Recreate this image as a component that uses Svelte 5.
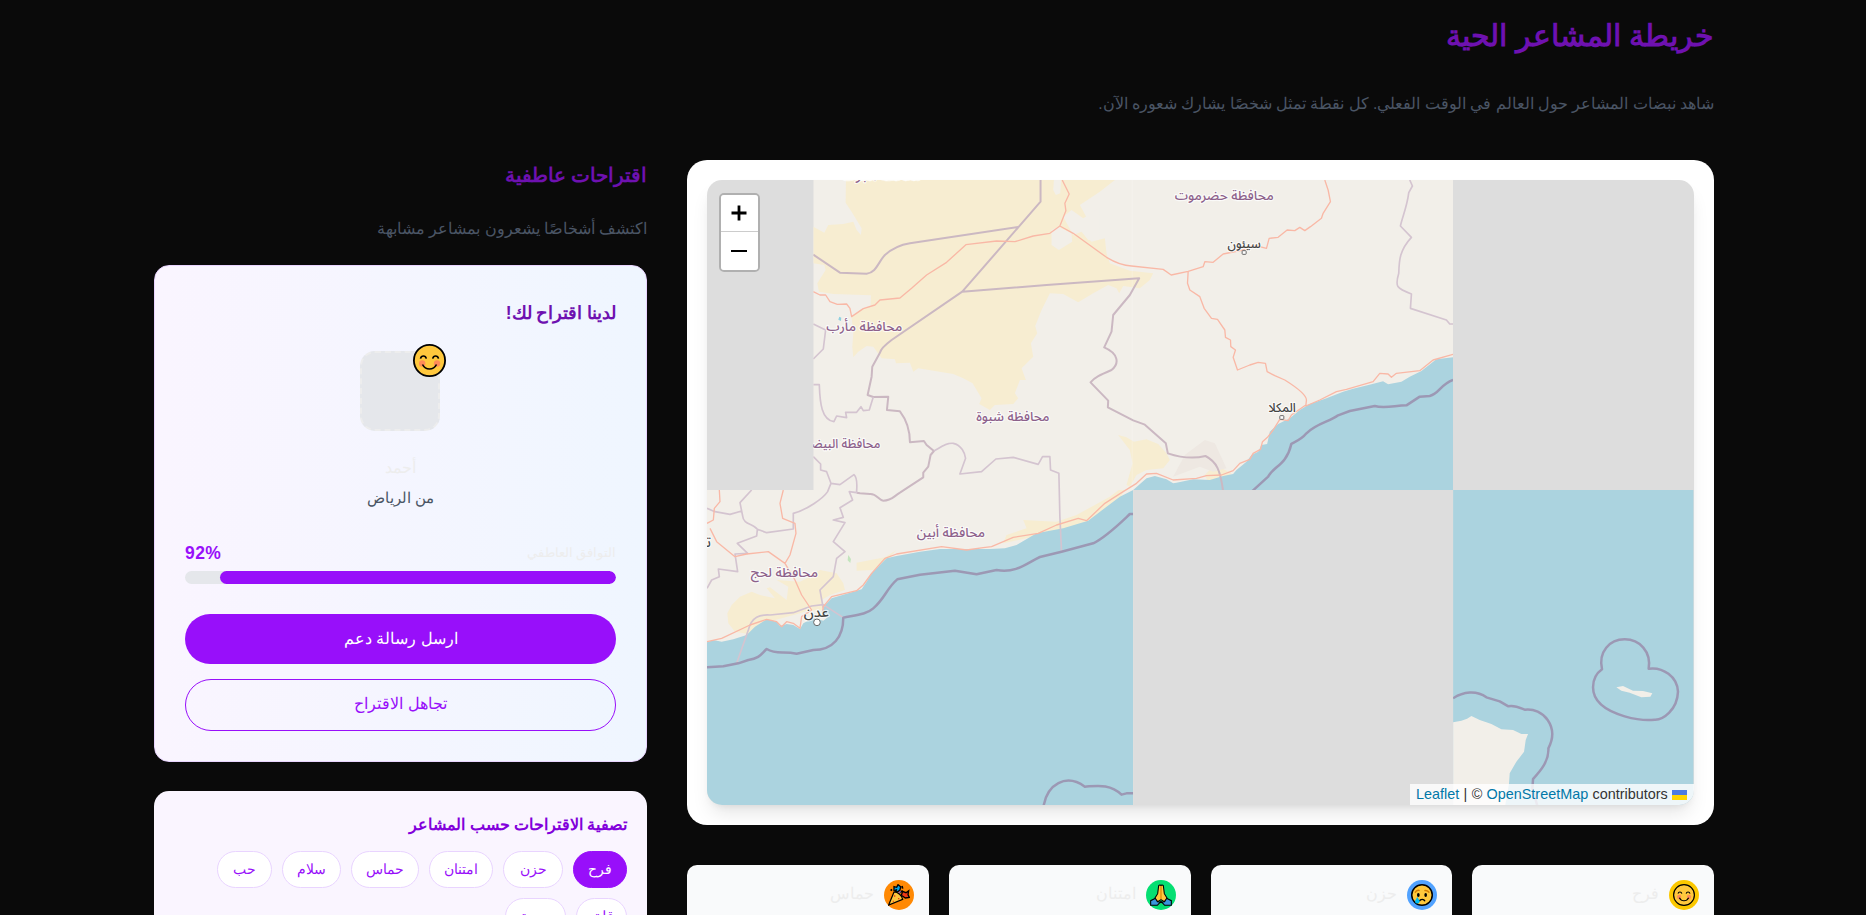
<script>
  const chips = [
    { label: 'فرح', width: 54 },
    { label: 'حزن', width: 60 },
    { label: 'امتنان', width: 64 },
    { label: 'حماس', width: 68 },
    { label: 'سلام', width: 59 },
    { label: 'حب', width: 55 },
    { label: 'قلق', width: 51 },
    { label: 'وحدة', width: 61 }
  ];
  const stats = [
    { label: 'فرح', icon: 'joy', color: '#fcc800' },
    { label: 'حزن', icon: 'sad', color: '#51a2ff' },
    { label: 'امتنان', icon: 'pray', color: '#05df72' },
    { label: 'حماس', icon: 'party', color: '#ff8904' }
  ];
  const match = 92;
  let active = $state('فرح');
</script>

{#snippet emoji(kind)}
  <svg class="emoji" viewBox="0 0 33 33" aria-hidden="true">
    {#if kind === 'joy'}
      <circle cx="16.5" cy="16.5" r="15.6" fill="#ffc83d" stroke="#000" stroke-width="1.8" />
      <circle cx="9.2" cy="19.5" r="3.2" fill="#ff8b58" />
      <circle cx="24" cy="19.5" r="3.2" fill="#ff8b58" />
      <path d="M7.5 14.6c.8-3.400 5-3.400 5.800 0M19.700 14.600c.8-3.400 5-3.400 5.800 0M9.500 20.500c3 6 11 6 14 0" fill="none" stroke="#000" stroke-width="1.6" />
    {:else if kind === 'sad'}
      <circle cx="16.5" cy="16.5" r="15.4" fill="#ffc83d" stroke="#000" stroke-width="2.2" />
      <path d="M6 13c2-3.500 4.500-4 7-3M20 10c3-1 5.500 0 7.500 3" fill="none" stroke="#d67d00" stroke-width="2.200" />
      <ellipse cx="11" cy="16.500" rx="2" ry="3" /><ellipse cx="22" cy="16.500" rx="2" ry="3" />
      <path d="M12.500 26c1.500-4 7-4 8.500 0" fill="none" stroke="#000" stroke-width="2" />
      <path d="M9.500 19.500c-2 3.500-3.500 5-3.500 7a3.600 3.600 0 0 0 7 0c0-2-1.500-3.500-3.500-7z" fill="#00bcf2" />
    {:else if kind === 'pray'}
      <path d="M9 21L1 25v7h10l5.500-6 5.500 6h10v-7l-8-4-2 5-5.500 2-5.500-2z" fill="#3a96dd" stroke="#000" stroke-width="1.600" />
      <path d="M13 2.500c1.500-2 3.500-1 3.500.5 0-1.500 2-2.500 3.500-.5l1.500 12 4 6.500-4 5.500-5-3-5 3L7.500 21l4-6.500z" fill="#ffc83d" stroke="#000" stroke-width="1.600" />
      <path d="M16.500 3v20" stroke="#d67d00" stroke-width="1.600" />
    {:else}
      <path d="M9 4l4 1 2-4 4 3-1 5-4 3-5-2z" fill="#00a2e8" stroke="#000" stroke-width="2" />
      <path d="M20 17l2-6 5 2 4-3-1 6 2 4-6 1z" fill="#f03a17" stroke="#000" stroke-width="2" />
      <path d="M17 13l5-3M6 8l-2 2M11 11l2-3M21 3l1 4" stroke="#000" stroke-width="2.500" />
      <path d="M15 15l4-4" stroke="#8661c5" stroke-width="2.200" />
      <path d="M9 12L1 31.500 22 23c-1-6-7-11-13-11z" fill="#ffc83d" stroke="#000" stroke-width="1.800" />
      <path d="M10 17v2M16 21v2M8 25v1.500" stroke="#f03a17" stroke-width="2" />
    {/if}
  </svg>
{/snippet}

{#snippet label(x, y, size, width, text)}
  <text {x} {y} font-size={size} textLength={width} lengthAdjust="spacingAndGlyphs">{text}</text>
{/snippet}

<div class="page" dir="rtl">
  <header>
    <h1>خريطة المشاعر الحية</h1>
    <p>شاهد نبضات المشاعر حول العالم في الوقت الفعلي. كل نقطة تمثل شخصًا يشارك شعوره الآن.</p>
  </header>

  <div class="layout">
    <main>
      <section class="map-card">
        <div class="map" dir="ltr">
          <svg class="tiles" viewBox="81 90 2961 1875" preserveAspectRatio="none">
            <defs>
              <clipPath id="north"><rect x="400" y="90" width="1920" height="930" /></clipPath>
              <clipPath id="southwest"><rect x="81" y="1020" width="1279" height="945" /></clipPath>
              <clipPath id="southeast"><rect x="2320" y="1020" width="722" height="945" /></clipPath>
              <clipPath id="land"><path d="M400 90H2320V1020H1360V1965H81V1020H400z" /></clipPath>
            </defs>

            <g clip-path="url(#north)">
              <rect x="400" y="90" width="1920" height="930" fill="#f2efe9" />
              <path class="desert" d="M498 90L497 158 515 185 545 235 543 255 530 240 520 215 490 222 445 225 433 248 400 230V340L433 345 437 360 412 400 417 425 460 432 573 436 572 468 540 480 515 500 520 550 517 590 520 622 535 605 560 588 580 590 605 625 645 628 648 640 690 638 700 665 715 655 820 672 850 685 878 700 905 745 898 762 930 780 945 765 1000 762 1015 745 1005 730 1020 690 1038 690 1025 655 1060 620 1053 580 1072 550 1066 528 1085 480 1100 450 1110 430 1150 432 1195 457 1240 430 1285 405 1310 415 1318 430 1330 408 1380 415 1410 390 1420 370 1350 362 1290 340 1280 310 1275 265 1235 275 1220 260 1235 230 1200 165 1260 125 1305 90z" />
              <path d="M1122 90h22l-3 40-13 5-8-15zM1150 200l25-20 35 25 25-15 25-20v90l-35 10-20-25-25 10zM1115 240l20-10 40 20 2 25-40 25-22-15z" fill="#f2efe9" />
              <path class="desert" d="M1315 855L1340 862 1362 875 1400 868 1435 882 1460 910 1470 930 1450 955 1400 960 1370 975 1350 1010 1340 1005 1358 940 1350 900zM1595 955l30 0 30 15-20 15-50 10-10-20z" />
              <path d="M1480 980L1515 915 1575 870 1605 880 1640 955 1600 965 1560 950z" fill="#eee8e2" />
              <path class="sea" d="M2320 622L2270 628 2225 663 2190 680 2165 695 2125 703 2110 694 2075 703 2020 716 1990 725 1940 745 1890 762 1860 780 1830 805 1795 822 1770 845 1762 882 1745 885 1735 905 1715 915 1700 935 1670 960 1660 972 1630 978 1590 990 1540 988 1490 998 1480 1000 1460 988 1425 978 1400 985 1360 1020H2320z" />
              <path d="M1357 90V1020" stroke="#fff" stroke-width="2" opacity=".35" />
            </g>

            <g clip-path="url(#southwest)">
              <rect x="81" y="1020" width="1280" height="945" fill="#f2efe9" />
              <g transform="translate(0 990)">
                <path class="desert" d="M142 400L155 375 180 350 215 335 240 345 285 355 260 325 270 322 320 360 325 320 290 300 360 305 390 290 420 270 470 280 490 310 495 330 450 345 425 360 430 390 380 392 360 400 250 430 205 462 165 455 145 430zM530 248L615 232 650 210 620 240 580 270 530 272zM1030 120l100 5 60-20 100-55 60-45-30 50-95 70-80 25-60 15-115 25 10-25 60-20z" />
                <path class="sea" d="M1360 30L1320 50 1225 122 1150 145 1070 160 1010 195 975 205 930 207 840 207 780 207 720 215 650 228 620 235 575 280 560 305 545 328 520 335 455 355 435 375 425 395 445 410 430 422 400 415 370 430 360 447 340 435 320 432 300 438 290 425 260 418 225 440 200 465 160 478 125 485 100 480 81 487V975H1360z" />
                <path d="M505 225l8 12-2 12-8-8z" fill="#c3e4bd" />
              </g>
            </g>

            <g clip-path="url(#southeast)">
              <rect class="sea" x="2320" y="1020" width="722" height="945" />
              <g transform="translate(2100 990)">
                <path fill="#f2efe9" d="M220 727L245 722 262 716 275 708 300 720 335 732 365 748 400 750 425 762 445 762 438 780 433 815 410 845 390 880 388 910 375 985H220z" />
                <path fill="#f2efe9" d="M710 622L730 618 760 632 790 633 818 640 812 650 785 652 750 638 725 632z" />
                <path class="marine" d="M220 655C250 635 290 630 320 652L360 664 386 679C405 675 420 683 435 689 490 682 540 740 506 805 508 845 480 875 460 897L458 925 475 985" />
                <path class="marine" d="M667 568C655 515 690 478 735 478S815 515 807 566C850 560 893 590 895 635 893 690 850 720 825 719 790 724 760 716 735 709 690 696 640 672 640 622 640 600 650 580 667 568z" />
              </g>
            </g>

            <g clip-path="url(#land)">
              <path class="border thick" d="M1082 90V155L1015 232 847 425 635 570C615 585 603 595 600 608L577 650 575 680 563 735 580 741 625 740 621 780 660 784C680 810 690 840 690 877L732 873 740 885 762 903 752 915 745 950 730 968 730 982 660 1028C640 1040 635 1052 610 1052 595 1050 590 1030 570 1032L540 1030 530 1028M400 314L480 368 560 371C590 368 595 335 615 315 640 293 665 284 690 280L1015 231M847 425L1100 405 1378 385 1350 435 1300 495 1295 545 1273 592C1315 610 1320 640 1295 660 1260 675 1245 682 1232 697L1285 752 1284 772 1360 811 1395 824 1458 880 1464 910C1500 922 1540 927 1577 918 1610 935 1622 960 1630 1025" />
              <path class="border" d="M400 522L437 540 430 597 400 627M400 704L418 704C420 760 425 810 462 815L470 798 500 803 497 787 530 787 543 770 550 782 568 780 580 741M400 920L422 942 422 960 440 965 453 1000 480 1004 522 974C535 985 530 1010 530 1028M453 1000L443 1025C430 1045 380 1080 340 1090V1137L260 1148 232 1138C220 1120 190 1125 188 1098L180 1058 215 1020M762 903C785 890 800 878 820 880 845 885 855 910 857 925L840 972 905 965 948 927 1000 922 1075 943 1088 920 1110 920 1112 960 1137 970 1140 1100 1145 1205M81 1075L105 1085 150 1093 185 1083M232 1140L230 1158 172 1180 203 1210 165 1212 173 1265 115 1257 118 1280 95 1290 81 1315M530 1028L508 1025 518 1050 480 1073 490 1102 460 1110 495 1118 460 1175 495 1205 470 1225 460 1280 420 1320 430 1375M170 1540L205 1440C215 1400 240 1393 270 1395L340 1388 395 1368 430 1364 490 1403" />
              <path class="border" d="M2190 90L2198 108 2187 128C2182 170 2168 200 2162 228L2195 262C2160 300 2158 330 2157 370 2145 410 2150 415 2195 432L2192 475 2300 510 2310 522H2320" />
              <path class="road" d="M400 425L420 435 437 435 450 455 472 463 500 462 510 475 515 500 550 476 585 465 600 450 660 444 695 415 740 375 800 337 858 284 950 273 1005 275 1060 258 1110 250 1140 228 1158 182 1155 160 1168 132 1147 90M1140 228L1180 250 1280 322C1310 340 1330 347 1355 348L1450 358 1474 375 1525 364 1570 350 1575 335 1600 337 1630 312 1690 300 1720 285 1760 295 1768 265 1795 262 1822 240 1845 242 1860 232 1875 242 1892 230 1925 205 1930 190 1952 155 1945 120 1935 90M1525 364L1523 400 1530 420 1560 440 1573 475 1595 505 1613 508 1635 540 1637 562 1652 570 1653 590 1667 600 1660 622 1673 660 1710 645 1735 637 1757 640 1762 665 1785 677 1815 690C1850 712 1880 735 1880 750L1878 768 1920 750 1970 725 2000 718 2080 695 2100 670 2125 672 2135 682 2150 670 2220 662 2260 630 2320 613M1878 765L1835 795 1825 812 1800 808 1780 840 1763 862 1748 875 1742 898 1720 910 1710 928 1680 940 1660 962 1625 975 1580 977 1550 985 1480 990 1430 970 1400 972 1370 1000 1330 1025 1275 1060 1220 1112 1195 1105 1130 1125 1075 1150 1000 1162 935 1190 910 1193 860 1200 785 1190 650 1212 615 1225 575 1270 550 1305 530 1322 455 1340 430 1370 428 1385M118 1020L120 1055 103 1075 100 1110 81 1120M90 1135L110 1175 165 1220 200 1212 265 1205 315 1240 330 1215 348 1150 345 1120 308 1105 300 1060 310 1020M315 1240L345 1290 365 1335 395 1380 365 1400 360 1435 340 1420 320 1415 305 1430 290 1415 260 1408 210 1425 125 1465 81 1475" />
              <path class="marine" d="M2320 690C2280 705 2280 730 2250 738L2220 740 2180 766C2140 768 2110 776 2085 768L2010 783 1975 796C1950 815 1910 820 1880 850 1860 875 1830 880 1834 884 1820 945 1780 950 1765 980L1710 1030M81 1552L130 1549 175 1540 205 1530C240 1525 245 1510 260 1497 290 1515 310 1502 350 1511L400 1500C460 1500 490 1460 490 1403 530 1395 560 1393 580 1375 615 1345 620 1315 652 1288L720 1274 825 1262 890 1273 950 1260C1010 1270 1040 1240 1080 1221L1145 1205 1240 1180C1280 1160 1315 1125 1350 1092H1360M1090 1975C1100 1900 1160 1870 1215 1910 1250 1908 1290 1900 1325 1934L1340 1930H1360" />
              <path d="M478 500l6 3-1 10-8-4z" fill="#8fd0e0" />
            </g>

            <g class="label" text-anchor="middle">
              <g clip-path="url(#north)">
                {@render label(605, 89, 39, 237, 'محافظة الجوف')}
                {@render label(553, 543, 39, 228, 'محافظة مأرب')}
                {@render label(999, 814, 39, 220, 'محافظة شبوة')}
                {@render label(484, 894, 39, 234, 'محافظة البيضاء')}
                {@render label(1633, 151, 39, 297, 'محافظة حضرموت')}
              </g>
              <g clip-path="url(#southwest)">
                {@render label(813, 1161, 39, 205, 'محافظة أبين')}
                {@render label(313, 1281, 39, 202, 'محافظة لحج')}
                <g class="city">
                  {@render label(68, 1190, 42, 50, 'تعز')}
                  {@render label(409, 1400, 42, 76, 'عدن')}
                  <circle cx="411" cy="1417" r="10" />
                </g>
              </g>
              <g class="city">
                {@render label(1693, 294, 38, 100, 'سيئون')}
                <rect x="1687" y="302" width="12" height="11" rx="2" />
                {@render label(1807, 786, 38, 82, 'المكلا')}
                <rect x="1800" y="797" width="12" height="11" rx="2" />
              </g>
            </g>
          </svg>

          <div class="zoom">
            <button aria-label="تكبير"><svg viewBox="0 0 16 16"><path d="M.5 8h15M8 .5v15" /></svg></button>
            <button aria-label="تصغير"><svg viewBox="0 0 16 16"><path d="M0 8h16" stroke-width="2" /></svg></button>
          </div>

          <div class="credit">
            <a href="#leaflet">Leaflet</a><span>|</span><span>©</span><a href="#osm">OpenStreetMap</a><span>contributors</span><i></i>
          </div>
        </div>
      </section>

      <div class="stats">
        {#each stats as s}
          <article>
            <span class="dot" style="background:{s.color}">{@render emoji(s.icon)}</span>
            <span>{s.label}</span>
          </article>
        {/each}
      </div>
    </main>

    <aside>
      <h2>اقتراحات عاطفية</h2>
      <p class="lead">اكتشف أشخاصًا يشعرون بمشاعر مشابهة</p>

      <section class="suggestion">
        <h3>لدينا اقتراح لك!</h3>
        <div class="avatar"><span class="badge">{@render emoji('joy')}</span></div>
        <div class="name">أحمد</div>
        <div class="place">من الرياض</div>
        <div class="score"><span>التوافق العاطفي</span><b dir="ltr">{match}%</b></div>
        <div class="bar"><div style="width:{match}%"></div></div>
        <button class="send">ارسل رسالة دعم</button>
        <button class="skip">تجاهل الاقتراح</button>
      </section>

      <section class="filter">
        <h4>تصفية الاقتراحات حسب المشاعر</h4>
        <div class="chips">
          {#each chips as c}
            <button class:active={active === c.label} style="width:{c.width}px" onclick={() => (active = c.label)}>{c.label}</button>
          {/each}
        </div>
      </section>
    </aside>
  </div>
</div>

<style>
  :global(body) { background: #0a0a0a; overflow: hidden; }
  .page {
    width: 1560px;
    height: 915px;
    margin: 0 auto;
    position: relative;
    left: 1px;
    overflow: hidden;
    box-sizing: border-box;
    padding-top: 11px;
    font-family: "Liberation Sans", serif;
    color: #ededed;
  }
  h1, h2, h3, h4, p { margin: 0; white-space: nowrap; }
  button { font-family: inherit; padding: 0; cursor: pointer; }
  h1 { font-size: 30px; line-height: 50px; color: #6e11b0; }
  header p { margin-top: 29px; font-size: 15.7px; line-height: 28px; color: #4a5565; }
  .layout { display: grid; grid-template-columns: 1026.67px 493.33px; gap: 40px; margin-top: 42px; }

  .map-card { background: #fff; border-radius: 20px; padding: 20px; height: 625px; overflow: hidden; }
  .map {
    position: relative;
    height: 625px;
    border-radius: 15px;
    overflow: hidden;
    background: #ddd;
    box-shadow: 0 12px 19px -4px rgba(0, 0, 0, 0.1), 0 5px 8px -5px rgba(0, 0, 0, 0.1);
  }
  .tiles { display: block; width: 100%; height: 100%; }
  .desert { fill: #f7edd1; }
  .sea { fill: #abd3df; }
  .border { fill: none; stroke: #d4c4d0; stroke-width: 5; stroke-linejoin: round; }
  .thick { stroke: #cbb8c2; stroke-width: 6; }
  .road { fill: none; stroke: #f9b8a6; stroke-width: 4; stroke-linejoin: round; }
  .marine { fill: none; stroke: #9c98b4; stroke-width: 7.5; stroke-linejoin: round; }
  .label text {
    font-family: "Noto Sans Arabic", "Noto Sans", sans-serif;
    font-weight: 500;
    fill: #8d618b;
    stroke: #fff;
    stroke-opacity: 0.7;
    stroke-width: 7;
    paint-order: stroke;
    stroke-linejoin: round;
  }
  .label .city text { fill: #444; }
  .city circle, .city rect { fill: #fff; stroke: #666; stroke-width: 3; }

  .zoom {
    position: absolute;
    left: 12px;
    top: 13px;
    width: 37px;
    border: 2.5px solid rgba(0, 0, 0, 0.2);
    background-clip: padding-box;
    border-radius: 5px;
    overflow: hidden;
  }
  .zoom button { display: grid; place-items: center; width: 37px; height: 38px; border: 0; background: #fff; }
  .zoom button:first-child { border-bottom: 1px solid #ccc; height: 37px; }
  .zoom svg { width: 16px; height: 16px; stroke: #000; stroke-width: 2.8; position: relative; left: -0.5px; }
  .credit {
    position: absolute;
    right: 0;
    bottom: 0;
    width: 284px;
    height: 21px;
    box-sizing: border-box;
    padding: 0 7px 0 6px;
    display: flex;
    align-items: center;
    justify-content: space-between;
    background: rgba(255, 255, 255, 0.8);
    font-size: 14.4px;
    line-height: 21px;
    color: #333;
    white-space: nowrap;
  }
  .credit a { color: #0078a8; text-decoration: none; }
  .credit i { width: 15px; height: 10px; background: linear-gradient(#4c7be1 50%, #ffd500 50%); }

  .stats { display: grid; grid-template-columns: repeat(4, 1fr); gap: 20px; margin-top: 40px; }
  article {
    height: 120px;
    box-sizing: border-box;
    padding: 15px;
    border-radius: 10px;
    background: #f9fafb;
    display: flex;
    gap: 10px;
    font-size: 15.6px;
    line-height: 27px;
  }
  .dot { width: 30px; height: 30px; border-radius: 50%; display: grid; place-items: center; }
  .dot .emoji { width: 22px; height: 22px; }
  .emoji { display: block; width: 100%; height: 100%; }

  h2 { font-size: 19.7px; line-height: 30px; color: #6e11b0; }
  .lead { margin-top: 26px; font-size: 15.8px; line-height: 26px; color: #4a5565; }
  .suggestion {
    margin-top: 23px;
    height: 497px;
    box-sizing: border-box;
    border: 1px solid #e9d4ff;
    border-radius: 15px;
    padding: 30px;
    background: linear-gradient(to left, #eff6ff, #faf5ff);
    text-align: center;
  }
  h3 { font-size: 17.5px; line-height: 34px; color: #6e11b0; text-align: right; }
  .avatar {
    position: relative;
    left: -1px;
    width: 80px;
    height: 80px;
    margin: 21px auto 0;
    box-sizing: border-box;
    border: 2px dashed #ededed;
    border-radius: 15px;
    background: #e5e7eb;
  }
  .badge { position: absolute; right: -8px; top: -9px; width: 33px; height: 33px; }
  .name { margin-top: 25px; font-size: 16px; line-height: 24px; }
  .place { margin-top: 6px; font-size: 14.5px; line-height: 24px; color: #4a5565; }
  .score { margin-top: 30px; display: flex; justify-content: space-between; line-height: 26px; font-size: 13.3px; }
  .score b { font-size: 17.5px; letter-spacing: 0.4px; color: #980ffa; }
  .bar { margin-top: 5px; height: 13px; border-radius: 7px; background: #e5e7eb; overflow: hidden; }
  .bar div { height: 100%; border-radius: 7px; background: #980ffa; }
  .send, .skip { display: block; width: 100%; border-radius: 26px; font-size: 15.9px; }
  .send { margin-top: 30px; height: 50px; border: 0; padding-bottom: 2px; background: #980ffa; color: #fff; }
  .skip { margin-top: 15px; height: 52px; padding-bottom: 3px; border: 1px solid #980ffa; background: transparent; color: #980ffa; font-size: 16.2px; }

  .filter { margin-top: 29px; height: 190px; box-sizing: border-box; padding: 20px; border-radius: 15px; background: #faf5ff; }
  h4 { font-size: 15.8px; line-height: 27px; color: #8200db; }
  .chips { margin-top: 13px; display: flex; flex-wrap: wrap; gap: 10px; }
  .chips button {
    height: 37px;
    box-sizing: border-box;
    border: 1px solid #e9d4ff;
    border-radius: 19px;
    padding-bottom: 2px;
    background: #fff;
    color: #980ffa;
    font-size: 13.6px;
  }
  .chips button.active { background: #980ffa; border-color: #980ffa; color: #fff; }
</style>
